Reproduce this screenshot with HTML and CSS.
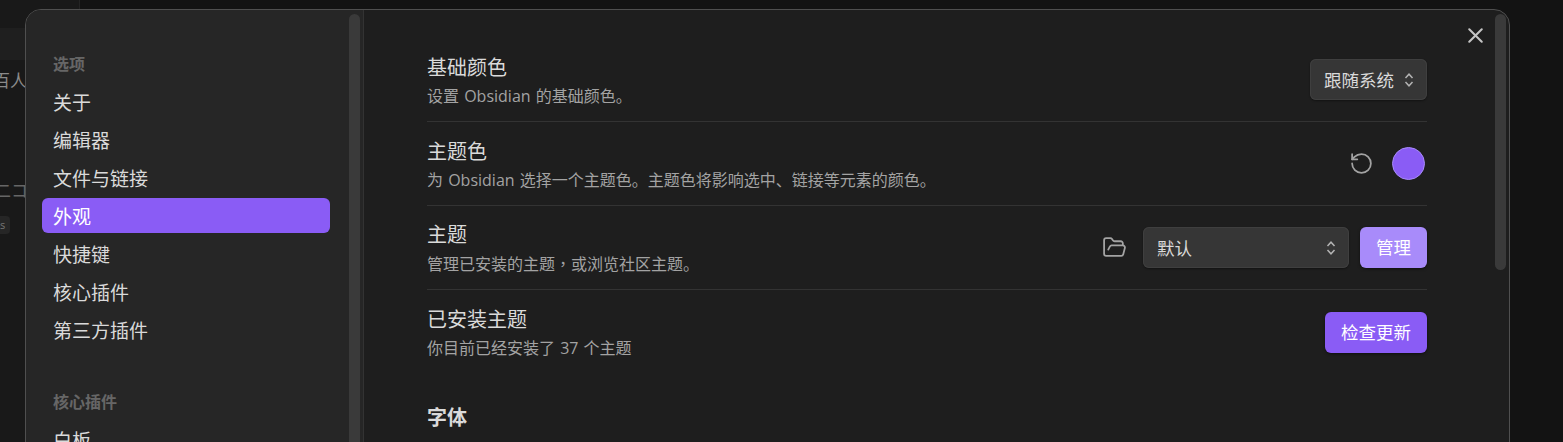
FILE: index.html
```html
<!DOCTYPE html>
<html lang="zh-CN">
  <head>
    <meta charset="UTF-8" />
    <meta name="viewport" content="width=device-width, initial-scale=1.0" />
    <title>设置</title>
    <link rel="stylesheet" href="styles.css">
  </head>
  <body>
    <div class="workspace">
      <div class="side-tabs"></div>
      <div class="side-tab-active"></div>
      <div class="side-line">百人</div>
      <div class="side-line side-line-low">二コ</div>
      <div class="side-tag">s</div>
    </div>

    <div class="modal">
      <div class="sidebar">
        <div class="nav-title">选项</div>
        <div class="nav-item">关于</div>
        <div class="nav-item">编辑器</div>
        <div class="nav-item">文件与链接</div>
        <div class="nav-item active">外观</div>
        <div class="nav-item">快捷键</div>
        <div class="nav-item">核心插件</div>
        <div class="nav-item">第三方插件</div>
        <div class="nav-title nav-title-gap">核心插件</div>
        <div class="nav-item">白板</div>
        <div class="scrollbar"></div>
      </div>

      <div class="content">
        <div class="setting">
          <div class="info">
            <div class="name">基础颜色</div>
            <div class="desc">设置 Obsidian 的基础颜色。</div>
          </div>
          <div class="control">
            <div class="select">
              <span>跟随系统</span>
              <svg class="updown" viewBox="0 0 10 16"><path d="M1.5 6 5 2.2 8.5 6M1.5 10 5 13.8 8.5 10"/></svg>
            </div>
          </div>
        </div>

        <div class="setting">
          <div class="info">
            <div class="name">主题色</div>
            <div class="desc">为 Obsidian 选择一个主题色。主题色将影响选中、链接等元素的颜色。</div>
          </div>
          <div class="control">
            <svg class="icon reset" viewBox="0 0 24 24"><path d="M3 12a9 9 0 1 0 9-9 9.75 9.75 0 0 0-6.74 2.74L3 8"/><path d="M3 3v5h5"/></svg>
            <div class="swatch"></div>
          </div>
        </div>

        <div class="setting">
          <div class="info">
            <div class="name">主题</div>
            <div class="desc">管理已安装的主题<span class="mid-comma" lang="zh-TW">，</span>或浏览社区主题。</div>
          </div>
          <div class="control">
            <svg class="icon folder" viewBox="0 0 24 24"><path d="m6 14 1.5-2.9A2 2 0 0 1 9.24 10H20a2 2 0 0 1 1.94 2.5l-1.54 6a2 2 0 0 1-1.95 1.5H4a2 2 0 0 1-2-2V5a2 2 0 0 1 2-2h3.9a2 2 0 0 1 1.69.9l.81 1.2a2 2 0 0 0 1.67.9H18a2 2 0 0 1 2 2v2"/></svg>
            <div class="select select-wide">
              <span>默认</span>
              <svg class="updown" viewBox="0 0 10 16"><path d="M1.5 6 5 2.2 8.5 6M1.5 10 5 13.8 8.5 10"/></svg>
            </div>
            <div class="btn btn-light">管理</div>
          </div>
        </div>

        <div class="setting">
          <div class="info">
            <div class="name">已安装主题</div>
            <div class="desc">你目前已经安装了 37 个主题</div>
          </div>
          <div class="control">
            <div class="btn">检查更新</div>
          </div>
        </div>

        <div class="heading">字体</div>

        <svg class="close" viewBox="0 0 24 24"><path d="M18 6 6 18M6 6l12 12"/></svg>
        <div class="scrollbar scrollbar-main"></div>
      </div>
    </div>
  </body>
</html>
```

FILE: styles.css
```css
* {
  box-sizing: border-box;
}

html,
body {
  height: 100%;
}

body {
  margin: 0;
  overflow: hidden;
  background-color: #131313;
  font-family: "Open Sans", "Noto Sans CJK SC", sans-serif;
  color: #dadada;
}

.workspace {
  width: 80px;
  height: 100%;
  overflow: hidden;
  background-color: #191919;
  border-right: 1px solid #242424;
  font-size: 17px;
  color: #8a8a8a;
}

.side-tabs {
  height: 28px;
}

.side-tab-active {
  height: 32px;
  background-color: #1f1f1f;
}

.side-line {
  margin-top: 7px;
  margin-left: -7px;
  height: 24px;
  white-space: nowrap;
}

.side-line-low {
  margin-top: 86px;
  margin-left: -6px;
  color: #666;
}

.side-tag {
  margin-top: 15px;
  width: 10px;
  height: 18px;
  border-radius: 0 4px 4px 0;
  background-color: #262626;
  font-size: 11px;
  line-height: 18px;
  color: #777;
}

.modal {
  position: absolute;
  top: 9px;
  left: 25px;
  width: 1485px;
  height: 460px;
  display: flex;
  border: 1px solid #4f4f4f;
  border-radius: 16px;
  overflow: hidden;
  background-color: #1e1e1e;
}

.sidebar {
  position: relative;
  flex: none;
  width: 338px;
  padding: 42px 0 0 16px;
  background-color: #262626;
  border-right: 1px solid #333;
}

.nav-title {
  height: 24px;
  padding-left: 11px;
  font-size: 16px;
  font-weight: 700;
  line-height: 24px;
  color: #666;
}

.nav-title-gap {
  margin-top: 43px;
}

.nav-item {
  width: 288px;
  height: 35px;
  margin-bottom: 3px;
  padding-left: 11px;
  border-radius: 6px;
  font-size: 19px;
  line-height: 38px;
  color: #dadada;
}

.nav-title + .nav-item {
  margin-top: 8px;
}

.nav-item.active {
  background-color: #8a5cf5;
  color: #fff;
}

.scrollbar {
  position: absolute;
  top: 4px;
  right: 3px;
  width: 11px;
  height: 460px;
  border-radius: 6px;
  background-color: #3a3a3a;
}

.scrollbar-main {
  height: 256px;
}

.content {
  position: relative;
  flex: 1;
  padding: 28px 82px 0 63px;
}

.setting {
  display: flex;
  align-items: center;
  justify-content: space-between;
  height: 84px;
  border-bottom: 1px solid #333;
}

.setting:nth-child(4) {
  border-bottom: 0;
}

.info {
  margin-top: 4px;
}

.name {
  font-size: 20px;
  line-height: 28px;
  color: #dadada;
}

.desc {
  font-size: 16px;
  line-height: 28px;
  word-spacing: 1px;
  color: #a3a3a3;
}

.mid-comma {
  font-family: "Noto Sans CJK TC", sans-serif;
}

.control {
  display: flex;
  align-items: center;
}

.select {
  display: flex;
  align-items: center;
  justify-content: space-between;
  width: 117px;
  height: 41px;
  padding: 0 13px 0 14px;
  border-radius: 6px;
  background-color: #363636;
  box-shadow: 0 1px 2px rgba(0, 0, 0, 0.4), inset 0 0 0 1px #3f3f3f;
  font-size: 17.5px;
  color: #dadada;
}

.select-wide {
  width: 206px;
  margin-right: 11px;
}

.updown {
  width: 10px;
  height: 16px;
  fill: none;
  stroke: #b3b3b3;
  stroke-width: 1.5;
}

.icon {
  fill: none;
  stroke: #a3a3a3;
  stroke-width: 1.7;
  stroke-linecap: round;
  stroke-linejoin: round;
}

.reset {
  width: 25px;
  height: 25px;
  margin-right: 18px;
}

.folder {
  width: 25px;
  height: 25px;
  margin-right: 16px;
}

.swatch {
  width: 33px;
  height: 33px;
  margin-right: 2px;
  border-radius: 50%;
  border: 1px solid #a88bfa;
  background-color: #8a5cf5;
}

.btn {
  height: 41px;
  padding: 0 16px;
  border-radius: 6px;
  background-color: #8a5cf5;
  box-shadow: 0 1px 3px rgba(0, 0, 0, 0.5);
  font-size: 17.5px;
  line-height: 41px;
  color: #fff;
}

.btn-light {
  background-color: #a88bfa;
}

.heading {
  margin-top: 30px;
  font-size: 20px;
  font-weight: 700;
  line-height: 28px;
  color: #dadada;
}

.close {
  position: absolute;
  top: 13px;
  right: 21px;
  width: 25px;
  height: 25px;
  fill: none;
  stroke: #c4c4c4;
  stroke-width: 2;
  stroke-linecap: round;
}
```
